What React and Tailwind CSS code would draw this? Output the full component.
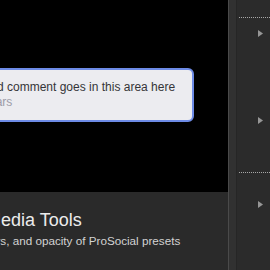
const Arrow = () => (
    <svg width="5" height="7" viewBox="0 0 5 7" className="block">
        <path d="M0 0 L5 3.5 L0 7 Z" fill="#969696" />
    </svg>
);

export default function App() {
    return (
        <div
            className="flex w-[270px] h-[270px] overflow-hidden bg-black"
            style={{ fontFamily: '"Liberation Sans", Arial, sans-serif' }}
        >
            <div className="flex flex-col w-[228px] shrink-0 overflow-hidden">
                <div className="h-[192px] bg-black pt-[68px]">
                    <div className="ml-[-10px] w-[204px] h-[54px] rounded-[6px] border-[2.5px] border-[#6d8be6] bg-[#ececf0] pl-[5px] pt-[10px] whitespace-nowrap">
                        <div className="text-[12px] leading-[15px] text-[#353538]">
                            d comment goes in this area here
                        </div>
                        <div className="ml-[-14px] text-[12px] leading-[15px] text-[#9c9ca8]">
                            years
                        </div>
                    </div>
                </div>
                <div className="flex-1 bg-[#2a2a2a] pt-[17px] whitespace-nowrap">
                    <div className="ml-[-14px] text-[18px] leading-[22px] text-[#ececec]">
                        Media Tools
                    </div>
                    <div className="ml-[-25px] mt-[2px] text-[11.7px] leading-[15px] text-[#d2d2d2]">
                        colors, and opacity of ProSocial presets
                    </div>
                </div>
            </div>
            <div className="w-px shrink-0 bg-[#4a4a4a]" />
            <div className="w-[8px] shrink-0 bg-[#313131] border-r border-[#262626]" />
            <div className="flex-1 bg-[#2b2b2b] flex flex-col">
                <div className="mt-[17px] ml-[2px] border-t border-dotted border-[#a8a8a8]" />
                <div className="mt-[12px] ml-[21px]">
                    <Arrow />
                </div>
                <div className="mt-[80px] ml-[21px]">
                    <Arrow />
                </div>
                <div className="mt-[48px] ml-[2px] border-t border-dotted border-[#a8a8a8]" />
                <div className="mt-[28px] ml-[21px]">
                    <Arrow />
                </div>
            </div>
        </div>
    );
}
